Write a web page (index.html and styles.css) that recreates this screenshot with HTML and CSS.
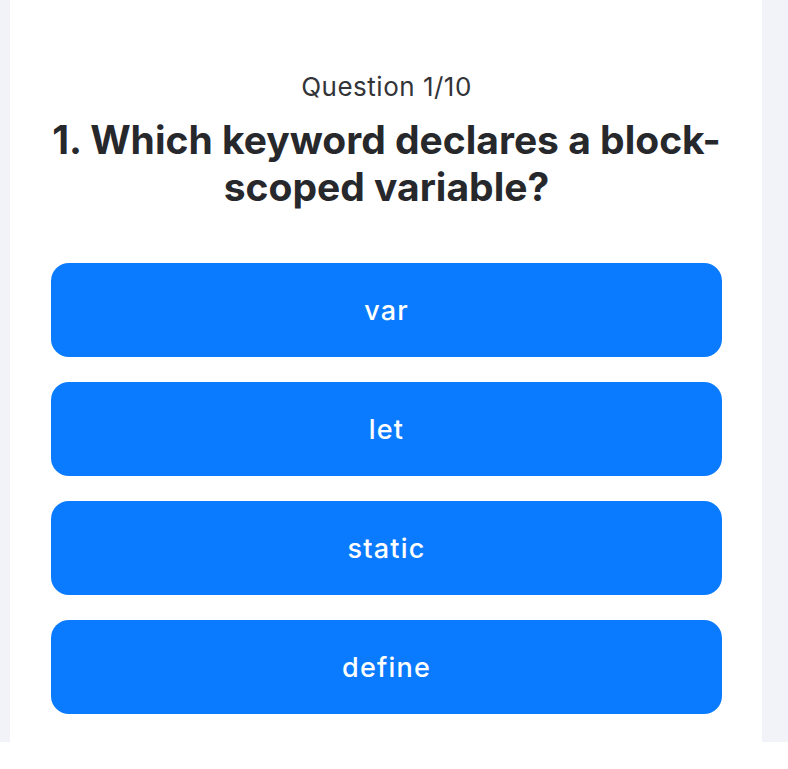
FILE: index.html
```html
<!DOCTYPE html>
<html lang="en">
<head>
<meta charset="utf-8">
<title>Quiz</title>
<link rel="stylesheet" href="styles.css">
</head>
<body>
<div class="page">
  <main class="card">
    <p class="counter">Question 1/10</p>
    <h1 class="question">1. Which keyword declares a block-scoped variable?</h1>
    <div class="options">
      <button class="option">var</button>
      <button class="option">let</button>
      <button class="option">static</button>
      <button class="option">define</button>
    </div>
  </main>
</div>
</body>
</html>
```
FILE: styles.css
```css
html, body {
  margin: 0;
  padding: 0;
  background: #ffffff;
}
body {
  font-family: "Inter", "Liberation Sans", sans-serif;
  color: #222327;
}
.page {
  display: flex;
  height: 742px;
  background: #f1f3f8;
  padding: 0 26px 0 10px;
}
.card {
  flex: 1;
  background: #ffffff;
  padding: 70px 40px 0 41px;
  display: flex;
  flex-direction: column;
  align-items: center;
}
.counter {
  margin: 0;
  font-size: 26px;
  line-height: 34px;
  font-weight: 400;
  letter-spacing: 0.5px;
  color: #333438;
}
.question {
  margin: 12px 0 0;
  font-size: 39px;
  line-height: 47px;
  font-weight: 700;
  text-align: center;
  color: #27282c;
}
.options {
  align-self: stretch;
  margin-top: 53px;
  display: flex;
  flex-direction: column;
  gap: 25px;
}
.option {
  height: 94px;
  border: none;
  border-radius: 18px;
  background: #0a7bff;
  color: #ffffff;
  font-family: "Inter", "Liberation Sans", sans-serif;
  font-size: 27px;
  font-weight: 500;
  letter-spacing: 1.2px;
  padding: 0;
}
```
